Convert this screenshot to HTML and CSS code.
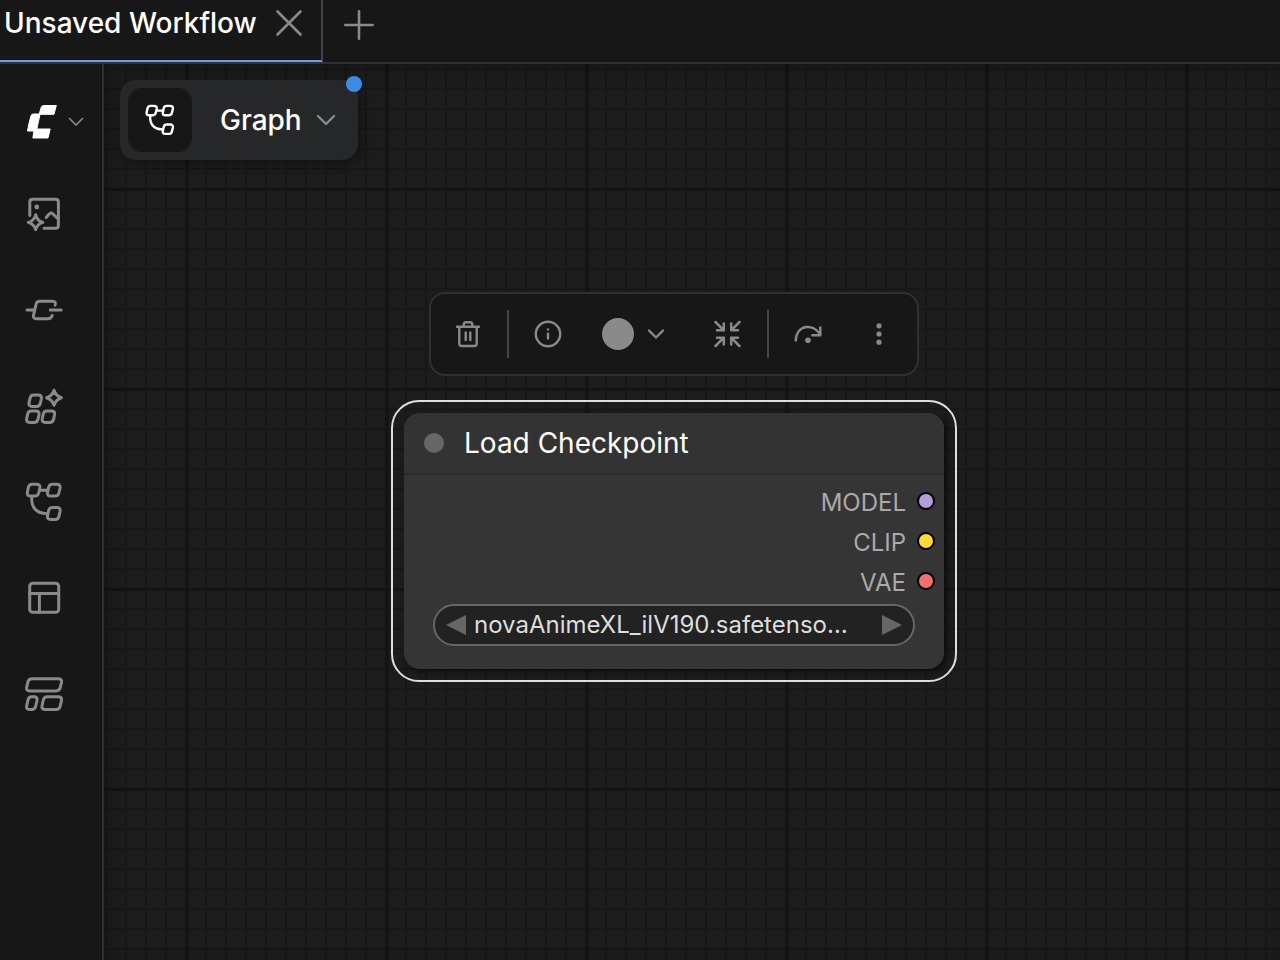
FILE: index.html
```html
<!DOCTYPE html>
<html lang="en">
<head>
<meta charset="utf-8">
<title>Unsaved Workflow</title>
<link rel="stylesheet" href="styles.css">
</head>
<body>
<svg class="defs" aria-hidden="true">
  <symbol id="cell" viewBox="-10 -10 20 20" overflow="visible"><path d="M-1.7-5.7H3Q6.8-5.7 6.2-2.2L5.2 2.4Q4.5 5.7 1.5 5.7H-3Q-6.8 5.7-6.2 2.2L-5.2-2.4Q-4.5-5.7-1.7-5.7Z"/></symbol>
  <symbol id="workflow" viewBox="0 0 40 40">
    <path d="M8.2 2.3H12.5Q16.5 2.3 15.9 6L14.7 11Q14 14.1 10.9 14.1H6.5Q2.7 14.1 3.3 10.6L4.4 5.4Q5.1 2.3 8.2 2.3Z"/>
    <path d="M28.4 2.3H32.7Q36.7 2.3 36.1 6L34.9 11Q34.2 14.1 31.1 14.1H26.7Q22.9 14.1 23.5 10.6L24.6 5.4Q25.3 2.3 28.4 2.3Z"/>
    <path d="M28.4 25.6H32.7Q36.7 25.6 36.1 29.3L34.9 34.3Q34.2 37.4 31.1 37.4H26.7Q22.9 37.4 23.5 33.9L24.6 28.7Q25.3 25.6 28.4 25.6Z"/>
    <path d="M15.9 8.3H23.9M7.8 14.5C7 25 12 31.7 23 31.7"/>
  </symbol>
</svg>
<div class="app">
  <header class="tabs">
    <div class="tab">
      <span class="tab-name">Unsaved Workflow</span>
      <button class="icon-btn" aria-label="Close tab"><svg class="icon muted" width="28" height="28" viewBox="0 0 28 28"><path d="M2.5 2.5 25.5 25.5M25.5 2.5 2.5 25.5"/></svg></button>
    </div>
    <button class="icon-btn add" aria-label="New workflow"><svg class="icon muted" width="32" height="32" viewBox="0 0 32 32"><path d="M16 2.3V29.7M2.3 16H29.7"/></svg></button>
  </header>
  <div class="main">
    <nav class="sidebar">
      <button class="side-btn brand" aria-label="Menu">
        <svg width="40" height="40" viewBox="0 0 40 40"><path class="logo" d="M21.5 3.5H34.3L32 12.3H18Q16.5 19.5 14.8 27H28.2L26 36H10.9L11.9 29H5.5Q7 20 9.2 13.2Q10 12 11.5 12H17.2L19.3 5.2Q20 3.5 21.5 3.5Z"/></svg>
        <svg class="icon" width="16" height="10" viewBox="0 0 16 10"><path stroke-width="1.7" d="M1.5 1.5 8 8 14.5 1.5"/></svg>
      </button>
      <button class="side-btn" aria-label="Assets"><svg class="icon" width="40" height="40" viewBox="0 0 40 40"><path d="M5.8 21.5V8.2Q5.8 5.3 8.7 5.3H31.5Q34.4 5.3 34.4 8.2V31.2Q34.4 34.2 31.5 34.2H20M22.2 23.5 25 20.2Q27 18 29 20L34.4 25.3M11.7 20.8Q13.1 26.8 18.9 28.4Q13.1 30 11.7 35.6Q10 30 4.3 28.4Q10 26.8 11.7 20.8Z"/><circle class="dot" cx="12.8" cy="13" r="2.4"/></svg></button>
      <button class="side-btn" aria-label="Nodes"><svg class="icon" width="40" height="40" viewBox="0 0 40 40"><path d="M3 20H9.8M26.3 20H37.2M31.2 15.2Q32.2 11.2 28.5 11.2H15.5Q12.8 11.2 12.1 14L9.5 25.3Q8.9 28.7 12.2 28.7H24Q27 28.7 28.2 25.5"/></svg></button>
      <button class="side-btn" aria-label="Models"><svg class="icon" width="40" height="40" viewBox="0 0 40 40"><use href="#cell" x="1.2" y="4.7" width="20" height="20"/><use href="#cell" x="-1.2" y="20.7" width="20" height="20"/><use href="#cell" x="14.4" y="20.7" width="20" height="20"/><path d="M30 4.2Q31.8 9.9 37.4 11.7Q31.8 13.5 30 19.2Q28.2 13.5 22.6 11.7Q28.2 9.9 30 4.2Z"/></svg></button>
      <button class="side-btn" aria-label="Workflows"><svg class="icon" width="40" height="40"><use href="#workflow"/></svg></button>
      <button class="side-btn" aria-label="Layouts"><svg class="icon" width="40" height="40" viewBox="0 0 40 40"><rect x="5.7" y="5.3" width="29" height="29" rx="3"/><path d="M5.7 15.4H34.7M15.4 15.4V34.3"/></svg></button>
      <button class="side-btn" aria-label="Templates"><svg class="icon" width="40" height="40" viewBox="0 0 40 40"><path d="M8.3 4.8H34Q38.2 4.8 37.5 8.3L36.2 13.7Q35.5 16.9 32 16.9H5.8Q1.9 16.9 2.6 13.5L3.9 8Q4.6 4.8 8.3 4.8ZM7.7 22.8H10Q13.8 22.8 13 26.5L11.7 32.2Q11 35.5 8 35.5H5.7Q1.9 35.5 2.7 31.8L4 26Q4.7 22.8 7.7 22.8ZM23.5 22.8H34Q38.2 22.8 37.5 26.3L36.2 32.2Q35.5 35.5 32 35.5H21.5Q17.3 35.5 18 32L19.3 26Q20 22.8 23.5 22.8Z"/></svg></button>
    </nav>
    <main class="canvas">
      <button class="mode">
        <span class="mode-icon"><svg class="icon white" width="32" height="32"><use href="#workflow"/></svg></span>
        <span class="mode-name">Graph</span>
        <svg class="icon" width="20" height="12" viewBox="0 0 20 12"><path stroke-width="2.4" d="M2 2 10 10 18 2"/></svg>
        <span class="badge"></span>
      </button>

      <div class="toolbar" role="toolbar" aria-label="Selection">
        <button class="tool" aria-label="Delete"><svg class="icon thin" width="28" height="28" viewBox="0 0 28 28"><path d="M3 6.7H25M5.3 6.7V23.5Q5.3 26 7.8 26H20.2Q22.7 26 22.7 23.5V6.7M9.7 6.5V4.5Q9.7 2.2 12 2.2H16Q18.3 2.2 18.3 4.5V6.5M11.7 12.5V20M16.3 12.5V20"/></svg></button>
        <span class="sep"></span>
        <button class="tool" aria-label="Info"><svg class="icon thin" width="28" height="28" viewBox="0 0 28 28"><circle cx="14" cy="14" r="12.2"/><path d="M14 13.8V18.6M14 9.4V9.5"/></svg></button>
        <button class="tool color" aria-label="Color"><span class="swatch"></span><svg class="icon thin" width="18" height="12" viewBox="0 0 18 12"><path d="M2 2.5 9 9.5 16 2.5"/></svg></button>
        <button class="tool" aria-label="Collapse"><svg class="icon" width="28" height="28" viewBox="0 0 28 28"><path stroke-width="2.5" d="M1.5 2 9.8 10.3M9.8 3.5V10.3H3M25.5 2 17.2 10.3M17.2 3.5V10.3H24M1.5 26 9.8 17.7M9.8 24.5V17.7H3M25.5 26 17.2 17.7M17.2 24.5V17.7H24"/></svg></button>
        <span class="sep"></span>
        <button class="tool" aria-label="Bypass"><svg class="icon" width="28" height="28" viewBox="0 0 28 28"><path stroke-width="2.5" d="M1.8 20.5C2.3 4 20.8 3 26.1 15M26.3 7.5V15.3H18.3"/><circle class="dot" cx="14" cy="20.3" r="2.8"/></svg></button>
        <button class="tool" aria-label="More options"><svg class="icon" width="28" height="28" viewBox="0 0 28 28"><g class="dot"><circle cx="14" cy="5.8" r="2.6"/><circle cx="14" cy="14" r="2.6"/><circle cx="14" cy="22.2" r="2.6"/></g></svg></button>
      </div>

      <section class="selection">
        <div class="node">
          <h2 class="node-title"><span class="node-dot"></span>Load Checkpoint</h2>
          <ul class="outputs">
            <li><span class="label">MODEL</span><span class="port model"></span></li>
            <li><span class="label">CLIP</span><span class="port clip"></span></li>
            <li><span class="label">VAE</span><span class="port vae"></span></li>
          </ul>
          <div class="widget">
            <button class="arrow" aria-label="Previous"><svg width="20" height="20" viewBox="0 0 20 20"><path d="M20 0V20L0 10Z"/></svg></button>
            <button class="value">novaAnimeXL_ilV190.safetenso…</button>
            <button class="arrow" aria-label="Next"><svg width="20" height="20" viewBox="0 0 20 20"><path d="M0 0V20L20 10Z"/></svg></button>
          </div>
        </div>
      </section>
    </main>
  </div>
</div>
</body>
</html>
```
FILE: styles.css
```css
* { box-sizing: border-box; }
body { margin: 0; background: #171718; color: #fff; font-family: Inter, sans-serif; }
button { border: 0; padding: 0; margin: 0; background: none; color: inherit; font: inherit; cursor: pointer; }
svg { display: block; flex: none; }
.defs { position: absolute; width: 0; height: 0; }

.icon { fill: none; stroke: #8a8a8a; stroke-width: 3; stroke-linecap: round; stroke-linejoin: round; }
.icon.muted { stroke-width: 2.6; }
.icon.thin { stroke-width: 2.4; }
.icon.white { stroke: #fff; }
.dot { fill: #8a8a8a; stroke: none; }
.logo { fill: #fff; stroke: #fff; stroke-width: 1; stroke-linejoin: round; }

.app { display: flex; flex-direction: column; min-height: 100vh; }
.tabs { display: flex; height: 64px; border-bottom: 2px solid #303036; }
.tab {
  display: flex; align-items: center; gap: 18px;
  padding: 0 18px 14px 4px;
  border-right: 2px solid #444447; border-bottom: 2px solid #6a9cf0;
  font-size: 28px; font-weight: 500; line-height: 36px; white-space: nowrap;
}
.icon-btn { display: flex; align-items: center; }
.add { padding: 0 20px 12px; }

.main { display: flex; flex: 1; }
.sidebar { flex: none; width: 104px; padding-top: 6px; border-right: 2px solid #303036; }
.side-btn { display: flex; align-items: center; width: 100%; height: 96px; padding-left: 24px; }
.brand { gap: 6px; padding: 8px 0 0 22px; }

.canvas {
  position: relative; flex: 1; padding: 16px; overflow: hidden;
  background-color: #1c1c1c;
  background-image:
    linear-gradient(90deg, #141414 4px, transparent 4px),
    linear-gradient(#141414 3px, transparent 3px),
    linear-gradient(90deg, #171717 2px, transparent 2px),
    linear-gradient(#171717 2px, transparent 2px);
  background-size: 200px 200px, 200px 200px, 20px 20px, 20px 20px;
  background-position: 81px 0, 0 124px, 1px 0, 0 4px;
  box-shadow: inset 4px 4px 16px rgba(0, 0, 0, .25);
}

.mode {
  position: relative; display: flex; align-items: center;
  padding: 8px 22px 8px 8px; border-radius: 16px;
  background: #262729; box-shadow: 2px 2px 12px rgba(0, 0, 0, .4);
}
.mode-icon { display: grid; place-items: center; width: 64px; height: 64px; border-radius: 14px; background: #171718; }
.mode-name { padding: 0 14px 0 28px; font-size: 28px; font-weight: 500; line-height: 36px; }
.badge { position: absolute; top: -4px; right: -4px; width: 16px; height: 16px; border-radius: 50%; background: #3f8ae2; }

.toolbar {
  position: absolute; left: 325px; top: 228px;
  display: flex; align-items: center; gap: 7px;
  height: 84px; padding: 0 6px 0 5px;
  border: 2px solid #303033; border-radius: 16px; background: #171718;
}
.tool { display: grid; place-items: center; width: 64px; height: 64px; }
.tool.color { display: flex; align-items: center; gap: 13px; width: 102px; padding-left: 15px; }
.swatch { width: 32px; height: 32px; border-radius: 50%; background: #8a8a8a; }
.sep { width: 2px; height: 48px; background: #44444a; }

.selection {
  position: absolute; left: 287px; top: 336px; width: 566px;
  padding: 11px; border: 2px solid #dedede; border-radius: 28px;
}
.node { padding-bottom: 23px; border-radius: 16px; background: #353535; box-shadow: 3px 3px 5px rgba(0, 0, 0, .5); }
.node-title {
  display: flex; align-items: center; gap: 20px; height: 62px; margin: 0; padding: 0 20px;
  border-bottom: 2px solid #2b2b2b; border-radius: 16px 16px 0 0; background: #333;
  font-size: 28px; font-weight: 400; line-height: 36px;
}
.node-dot { width: 20px; height: 20px; border-radius: 50%; background: #666; }
.outputs { margin: 0; padding: 6px 9px 3px; list-style: none; color: #aaa; font-size: 24px; line-height: 32px; }
.outputs li { display: flex; align-items: center; justify-content: flex-end; gap: 11px; height: 40px; }
.label { padding-top: 4px; }
.port { width: 18px; height: 18px; border: 2px solid #000; border-radius: 50%; }
.model { background: #b39ddb; }
.clip { background: #ffd93b; }
.vae { background: #f2716c; }
.widget {
  display: flex; align-items: center; gap: 8px; height: 42px; margin: 0 29px; padding: 0 11px;
  border: 2px solid #666; border-radius: 21px; background: #222;
}
.value { flex: 1; min-width: 0; overflow: hidden; text-align: left; white-space: nowrap; color: #ddd; font-size: 24px; line-height: 32px; }
.arrow { fill: #666; }
```
